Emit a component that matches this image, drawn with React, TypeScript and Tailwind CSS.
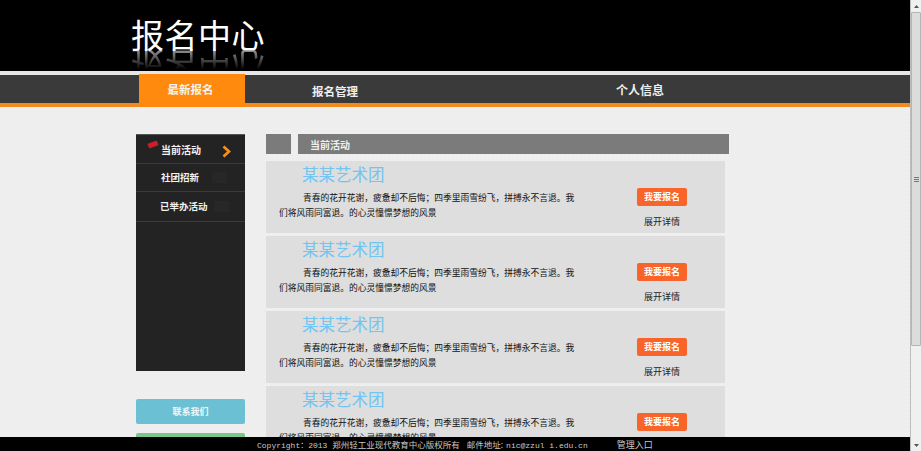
const cjk = "font-['Noto_Sans_CJK_SC','Liberation_Sans',sans-serif]";

function Card() {
  return (
    <div className="flex h-[72px] w-[459px] shrink-0 bg-[#dedede]">
      <div className="w-[326px] pl-[13px]">
        <h3 className="mt-[3px] pl-[23px] text-[16.5px] leading-[20px] font-normal text-[#72c4f2]">某某艺术团</h3>
        <p className="mt-[6px] w-[300px] indent-[24px] text-[8.75px] leading-[15px] text-[#111]">
          青春的花开花谢，疲惫却不后悔；四季里雨雪纷飞，拼搏永不言退。我们将风雨同富退。的心灵憧憬梦想的风景
        </p>
      </div>
      <div className="ml-[45px] flex w-[50px] flex-col items-center pt-[27px]">
        <button className="h-[18px] w-[50px] rounded-[2px] bg-[#f9642a] text-[9px] leading-[18px] font-bold text-[#fff]">我要报名</button>
        <span className="mt-[10px] text-[9px] leading-[12px] text-[#222]">展开详情</span>
      </div>
    </div>
  );
}

function Scrollbar() {
  return (
    <div className="flex h-full w-[11px] shrink-0 flex-col border-l border-[#bdbdbd] bg-[#f0f0f0]">
      <div className="flex h-[12px] shrink-0 items-center justify-center">
        <svg width="5" height="3" viewBox="0 0 5 3"><path d="M2.5 0 5 3H0z" fill="#555" /></svg>
      </div>
      <div className="flex h-[334px] shrink-0 items-center justify-center rounded-[1px] border border-[#b5b5b5] bg-[#dcdcdc]">
        <div className="flex w-[5px] flex-col gap-[1px]">
          <div className="h-px bg-[#777]" />
          <div className="h-px bg-[#777]" />
          <div className="h-px bg-[#777]" />
        </div>
      </div>
      <div className="flex-1" />
      <div className="flex h-[12px] shrink-0 items-center justify-center">
        <svg width="5" height="3" viewBox="0 0 5 3"><path d="M2.5 3 5 0H0z" fill="#555" /></svg>
      </div>
    </div>
  );
}

export default function App() {
  return (
    <div className={`relative flex h-[451px] w-[921px] overflow-hidden bg-[#efefef] ${cjk}`}>
      <div className="h-full w-[910px] shrink-0 overflow-hidden bg-[linear-gradient(45deg,#ececec_25%,transparent_25%,transparent_75%,#ececec_75%)] bg-[length:4px_4px]">
        <header className="h-[71px] overflow-hidden bg-black pl-[131px]">
          <div className="pt-[12px] text-[33px] leading-[44px] tracking-[0.5px] font-normal text-white">报名中心</div>
          <div className="-mt-[12px] h-[44px] -scale-y-100 text-[33px] leading-[44px] tracking-[0.5px] text-white opacity-60 [mask-image:linear-gradient(to_top,black_12%,transparent_58%)]">报名中心</div>
        </header>

        <nav className="flex h-[36px] border-t-4 border-b-4 border-t-[#e6e6e6] border-b-[#f28a1c] bg-[#3a3a3a] pl-[139px]">
          <div className="-mt-px flex h-[33px] w-[106px] items-start justify-center bg-[#ff8a0d] pt-[8px] pr-[3px] text-[11.5px] leading-[15px] font-bold text-[#f3f3f3]">最新报名</div>
          <div className="flex w-[180px] justify-center pt-[8px] text-[11.5px] leading-[16px] font-bold text-[#eeeeee]">报名管理</div>
          <div className="flex w-[430px] justify-center pt-[7px] text-[12px] leading-[16px] font-bold text-[#eeeeee]">个人信息</div>
        </nav>

        <main className="flex pt-[27px] pl-[136px]">
          <div className="w-[109px] shrink-0">
            <div className="h-[237px] border-t border-[#555] bg-[#232323] font-bold text-[#f2f2f2]">
              <div className="relative flex h-[29px] items-center border-b border-[#3b3b3b] pl-[25px] text-[10px]">
                <span className="absolute top-[7px] left-[12px] h-[5px] w-[10px] -rotate-20 rounded-[1px] bg-[#cf1c2b]" />
                当前活动
                <svg className="absolute top-[10px] left-[86px]" width="9" height="13" viewBox="0 0 9 13" fill="none">
                  <path d="M1.5 1.5 7 6.5 1.5 11.5" stroke="#f5901e" strokeWidth="2.8" />
                </svg>
              </div>
              <div className="flex h-[28px] items-center border-b border-[#3b3b3b] pl-[25px] text-[9.5px]">
                社团招新
                <span className="ml-[13px] h-[11px] w-[15px] bg-[#272727]" />
              </div>
              <div className="flex h-[30px] items-center border-b border-[#3b3b3b] pl-[24px] text-[9.5px]">
                已举办活动
                <span className="ml-[6px] h-[11px] w-[15px] bg-[#272727]" />
              </div>
            </div>
            <div className="mt-[28px] flex h-[25px] items-center justify-center rounded-[2px] bg-[#6cc0d3] text-[9px] font-bold text-[#eef8fa]">联系我们</div>
            <div className="mt-[9px] h-[25px] rounded-[2px] bg-[#7cc68a]" />
          </div>

          <div className="ml-[21px] flex-1">
            <div className="flex h-[20px] w-[463px]">
              <div className="h-full w-[25px] bg-[#7b7b7b]" />
              <div className="ml-[7px] flex-1 bg-[#7b7b7b] pl-[12px] text-[10px] leading-[21px] font-bold text-[#efefef]">当前活动</div>
            </div>
            <div className="mt-[7px] flex flex-col gap-[3px]">
              <Card />
              <Card />
              <Card />
              <Card />
            </div>
          </div>
        </main>
      </div>

      <Scrollbar />

      <footer className="absolute bottom-0 left-0 flex h-[14px] w-[910px] items-baseline bg-black pl-[257px] text-[8.5px] leading-[14px] whitespace-pre text-[#c8c8c8]">
        <span className="font-['Liberation_Mono','Noto_Sans_CJK_SC',monospace] text-[8px]">Copyright：2013 </span>
        <span>郑州轻工业现代教育中心版权所有</span>
        <span className="ml-[7px]">邮件地址:</span>
        <span className="ml-[3px] font-['Liberation_Mono',monospace] text-[8px]">nic@zzul i.edu.cn</span>
        <span className="ml-[29px] text-[9px]">管理入口</span>
      </footer>
    </div>
  );
}
